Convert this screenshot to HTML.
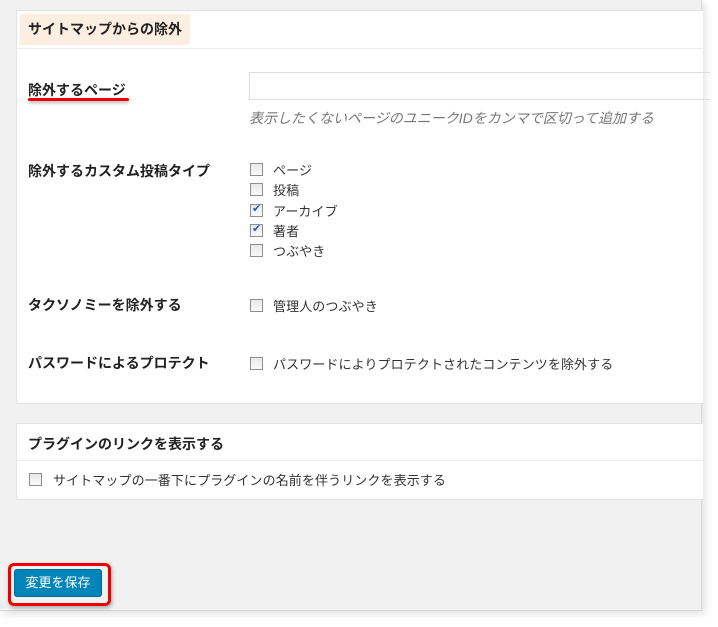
<!DOCTYPE html>
<html><head><meta charset="utf-8"><style>
body{margin:0;width:718px;height:627px;background:#fff;font-family:"Liberation Sans","Noto Sans CJK JP",sans-serif;position:relative;overflow:hidden}
.frame{position:absolute;left:0;top:0;width:701px;height:610px;background:#f1f1f1;border:1px solid #d8d8d8;border-top:none;border-left:none;box-shadow:3px 3px 8px rgba(0,0,0,.12)}
.panel{position:absolute;left:16px;width:686px;background:#fff;border:1px solid #e3e3e3;border-right:none}
.abs{position:absolute;white-space:nowrap}
.lbl{font-size:14px;font-weight:bold;color:#222}
.t{font-size:13px;color:#333;letter-spacing:0.1px}
.cb{position:absolute;width:11px;height:11px;border:1px solid #8f8f8f;background:linear-gradient(#e8e8e8,#fafafa)}
.cb.c::after{content:"✔";position:absolute;left:1px;top:-3px;font-size:11px;color:#2a5db0}
</style></head><body>
<div class="frame"></div>
<div class="panel" style="top:10px;height:392px">
  <div class="abs lbl" style="left:3px;top:3px;width:170px;height:31px;background:#fcefe2;line-height:31px;padding-left:8px;box-sizing:border-box">サイトマップからの除外</div>
  <div style="position:absolute;left:0;right:0;top:37px;border-top:1px solid #eee"></div>
  <div class="abs lbl" style="left:11px;top:69px">除外するページ</div>
  <div style="position:absolute;left:11px;top:87px;width:101px;height:3px;background:#e00;border-radius:2px;box-shadow:0 2px 3px rgba(0,0,0,.3)"></div>
  <div style="position:absolute;left:232px;top:61px;width:460px;height:26px;border:1px solid #ddd;border-right:none"></div>
  <div class="abs" style="left:232px;top:97px;font-size:14px;font-style:italic;color:#777">表示したくないページのユニークIDをカンマで区切って追加する</div>
  <div class="abs lbl" style="left:11px;top:150px">除外するカスタム投稿タイプ</div>
  <div class="cb" style="left:233px;top:152px"></div><div class="abs t" style="left:256px;top:149px">ページ</div>
  <div class="cb" style="left:233px;top:172px"></div><div class="abs t" style="left:256px;top:169px">投稿</div>
  <div class="cb c" style="left:233px;top:193px"></div><div class="abs t" style="left:256px;top:190px">アーカイブ</div>
  <div class="cb c" style="left:233px;top:213px"></div><div class="abs t" style="left:256px;top:210px">著者</div>
  <div class="cb" style="left:233px;top:233px"></div><div class="abs t" style="left:256px;top:230px">つぶやき</div>
  <div class="abs lbl" style="left:11px;top:284px">タクソノミーを除外する</div>
  <div class="cb" style="left:233px;top:288px"></div><div class="abs t" style="left:256px;top:285px">管理人のつぶやき</div>
  <div class="abs lbl" style="left:11px;top:342px">パスワードによるプロテクト</div>
  <div class="cb" style="left:233px;top:346px"></div><div class="abs t" style="left:256px;top:343px">パスワードによりプロテクトされたコンテンツを除外する</div>
</div>
<div class="panel" style="top:423px;height:75px">
  <div class="abs lbl" style="left:11px;top:10px">プラグインのリンクを表示する</div>
  <div style="position:absolute;left:0;right:0;top:36px;border-top:1px solid #eee"></div>
  <div class="cb" style="left:12px;top:49px"></div><div class="abs t" style="left:36px;top:46px">サイトマップの一番下にプラグインの名前を伴うリンクを表示する</div>
</div>
<div style="position:absolute;left:8px;top:563px;width:97px;height:37px;border:3px solid #e00;border-radius:6px;box-shadow:1px 2px 4px rgba(0,0,0,.3)"></div>
<div class="abs" style="left:14px;top:569px;width:88px;height:28px;background:#0085ba;border:1px solid #006799;box-sizing:border-box;border-radius:3px;color:#fff;font-size:13px;line-height:26px;text-align:center">変更を保存</div>
</body></html>
